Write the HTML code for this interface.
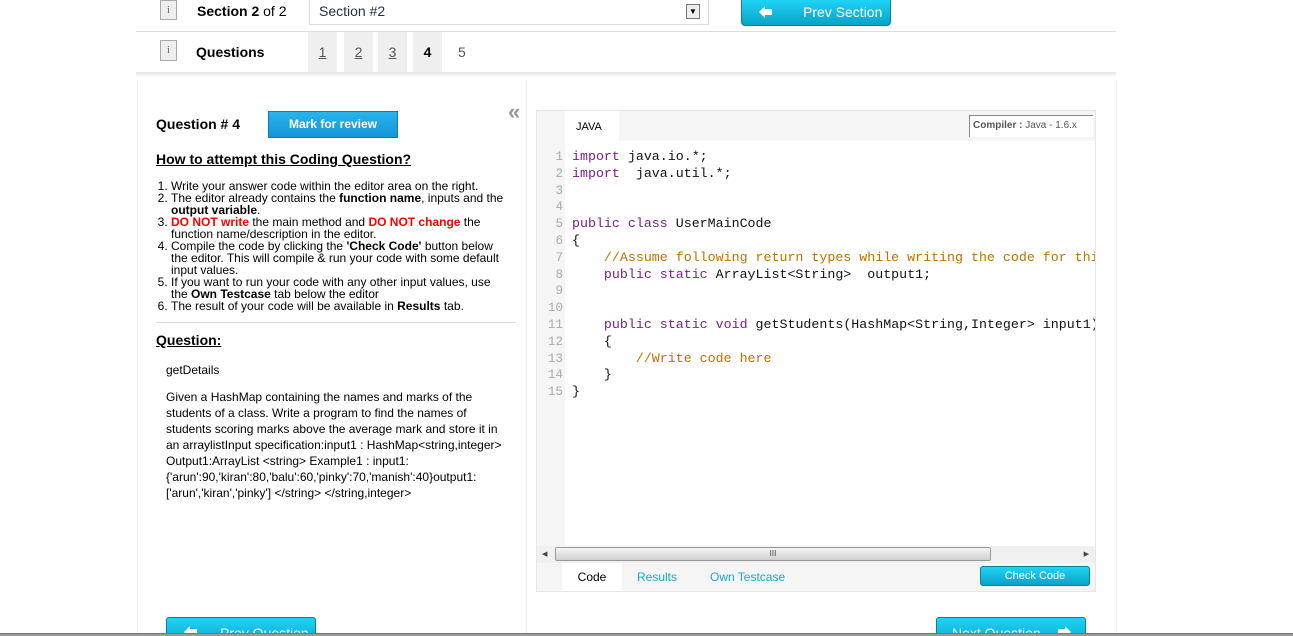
<!DOCTYPE html>
<html><head><meta charset="utf-8">
<style>
*{margin:0;padding:0;box-sizing:border-box}
html,body{width:1293px;height:636px;overflow:hidden}
body{background:#fff;font-family:"Liberation Sans",Arial,sans-serif;position:relative;color:#000}
.a{position:absolute}
.icon{position:absolute;width:17px;height:21px;background:#eee;border:1px solid #aaa;font:11px "Liberation Serif",serif;color:#666;text-align:center;line-height:19px}
.btn{position:absolute;background:linear-gradient(#1fd3f5,#0aa3c8);border:1px solid #0a7f9e;border-radius:3px;color:#fff;font-size:12px;text-align:center}
.pg{position:absolute;top:32px;width:29px;height:40px;background:#efefef;font-size:14px;color:#555;text-align:center;line-height:40px;text-decoration:underline}
ol{position:absolute;left:156px;top:180px;width:354px;font-size:12px;line-height:12px;padding-left:15px}
.r{color:#f00;font-weight:bold}
pre{font-family:"Liberation Mono",monospace;font-size:13.3px;line-height:16.8px}
.k{color:#7a1f8e}.c{color:#c07000}
svg{position:absolute}
</style></head><body>
<div class="icon" style="left:160px;top:0;height:20px">i</div>
<div class="a" style="left:197px;top:3px;font-size:14px"><b>Section 2</b> of 2</div>
<div class="a" style="left:309px;top:0;width:400px;height:25px;border:1px solid #ddd;border-top:none;font-size:14px;color:#234;padding:3px 0 0 9px">Section #2</div>
<div class="a" style="left:686px;top:4px;width:14px;height:15px;border:1px solid #777;background:#eee;font-size:8px;text-align:center;line-height:14px">▼</div>
<div class="btn" style="left:741px;top:0;width:150px;height:26px;border-top:none;font-size:14px;line-height:24px;border-radius:0 0 4px 4px;text-align:left">
<svg style="left:17px;top:6px" width="14" height="12" viewBox="0 0 14 12"><path d="M0 6L6 0V3H13V9H6V12Z" fill="#fff"/></svg>
<span style="position:absolute;left:61px">Prev Section</span></div>
<div class="a" style="left:136px;top:31px;width:980px;height:1px;background:#ddd"></div>
<div class="icon" style="left:160px;top:40px">i</div>
<div class="a" style="left:196px;top:44px;font-size:14px;font-weight:bold">Questions</div>
<div class="pg" style="left:308px">1</div><div class="pg" style="left:344px">2</div><div class="pg" style="left:378px">3</div>
<div class="pg" style="left:413px;text-decoration:none;color:#000;font-weight:bold">4</div>
<div class="a" style="left:458px;top:44px;font-size:14px;color:#555">5</div>
<div class="a" style="left:136px;top:72px;width:980px;height:6px;background:linear-gradient(#e6e6e6,#fff)"></div>
<div class="a" style="left:526px;top:80px;width:1px;height:556px;background:#eee"></div>
<div class="a" style="left:137px;top:80px;width:1px;height:556px;background:#f2f2f2"></div>
<div class="a" style="left:1116px;top:80px;width:1px;height:556px;background:#f2f2f2"></div>
<div class="a" style="left:156px;top:116px;font-size:14px;font-weight:bold">Question # 4</div>
<div class="btn" style="left:268px;top:111px;width:130px;height:27px;line-height:25px;font-weight:bold;border-radius:0;background:linear-gradient(#27b4ec,#1596d6);border-color:#1178b0">Mark for review</div>
<div class="a" style="left:508px;top:99px;font-size:22px;color:#999;font-weight:bold;letter-spacing:-3px">«</div>
<div class="a" style="left:156px;top:151px;font-size:14px;font-weight:bold;text-decoration:underline">How to attempt this Coding Question?</div>
<ol>
<li>Write your answer code within the editor area on the right.</li>
<li>The editor already contains the <b>function name</b>, inputs and the <b>output variable</b>.</li>
<li><span class="r">DO NOT write</span> the main method and <span class="r">DO NOT change</span> the function name/description in the editor.</li>
<li>Compile the code by clicking the <b>'Check Code'</b> button below the editor. This will compile &amp; run your code with some default input values.</li>
<li>If you want to run your code with any other input values, use the <b>Own Testcase</b> tab below the editor</li>
<li>The result of your code will be available in <b>Results</b> tab.</li>
</ol>
<div class="a" style="left:156px;top:322px;width:360px;height:1px;background:#ddd"></div>
<div class="a" style="left:156px;top:332px;font-size:14px;font-weight:bold;text-decoration:underline">Question:</div>
<div class="a" style="left:166px;top:363px;font-size:12px">getDetails</div>
<div class="a" style="left:166px;top:389px;width:346px;font-size:12px;line-height:16px">Given a HashMap containing the names and marks of the students of a class. Write a program to find the names of students scoring marks above the average mark and store it in an arraylistInput specification:input1 : HashMap&lt;string,integer&gt; Output1:ArrayList &lt;string&gt; Example1 : input1: {'arun':90,'kiran':80,'balu':60,'pinky':70,'manish':40}output1: ['arun','kiran','pinky'] &lt;/string&gt; &lt;/string,integer&gt;</div>
<div class="a" style="left:536px;top:110px;width:560px;height:482px;border:1px solid #e6e6e6;background:#f5f5f5;overflow:hidden">
 <div class="a" style="left:28px;top:0;width:530px;height:435px;background:#fff"></div>
 <div class="a" style="left:0;top:0;width:560px;height:30px;background:#f5f5f5"></div>
 <div class="a" style="left:28px;top:0;width:54px;height:30px;background:#fff;font-size:11px;padding:10px 0 0 11px">JAVA</div>
 <div class="a" style="left:432px;top:4px;width:124px;height:22px;border:1px solid #888;border-right:none;border-bottom:none;background:#fff;font-size:10px;color:#555;padding:4px 0 0 3px"><b>Compiler :</b> Java - 1.6.x</div>
 <pre class="a" style="left:0;top:38px;width:28px;text-align:right;color:#aaa;padding-right:2px;font-size:12.6px">1
2
3
4
5
6
7
8
9
10
11
12
13
14
15</pre>
 <pre class="a" style="left:35px;top:38px;color:#111"><span class="k">import</span> java.io.*;
<span class="k">import</span>  java.util.*;


<span class="k">public class</span> UserMainCode
{
    <span class="c">//Assume following return types while writing the code for this question.</span>
    <span class="k">public static</span> ArrayList&lt;String&gt;  output1;


    <span class="k">public static void</span> getStudents(HashMap&lt;String,Integer&gt; input1)
    {
        <span class="c">//Write code here</span>
    }
}</pre>
 <div class="a" style="left:0;top:435px;width:558px;height:17px;background:#f0f0f0;font-size:7px;color:#444;line-height:17px"><span style="position:absolute;left:5px">◀</span><span style="position:absolute;right:6px">▶</span>
  <div class="a" style="left:18px;top:1px;width:436px;height:14px;border:1px solid #999;border-radius:2px;background:linear-gradient(#f4f4f4,#cfcfcf);text-align:center;line-height:12px;font-size:8px">III</div></div>
 <div class="a" style="left:25px;top:452px;width:60px;height:29px;background:#fff;font-size:12px;text-align:center;line-height:29px">Code</div>
 <div class="a" style="left:100px;top:459px;font-size:12px;color:#19a6cf">Results</div>
 <div class="a" style="left:173px;top:459px;font-size:12px;color:#19a6cf">Own Testcase</div>
 <div class="btn" style="left:443px;top:455px;width:110px;height:20px;line-height:18px;font-size:11px">Check Code</div>
</div>
<div class="btn" style="left:166px;top:617px;width:150px;height:30px;font-size:14px;line-height:24px;text-align:left">
<svg style="left:17px;top:8px" width="14" height="12" viewBox="0 0 14 12"><path d="M0 6L6 0V3H13V9H6V12Z" fill="#fff"/></svg>
<span style="position:absolute;left:53px;top:3px">Prev Question</span></div>
<div class="btn" style="left:936px;top:617px;width:150px;height:30px;font-size:14px;line-height:24px;text-align:left">
<span style="position:absolute;left:15px;top:3px">Next Question</span>
<svg style="left:120px;top:8px" width="14" height="12" viewBox="0 0 14 12"><path d="M14 6L8 0V3H1V9H8V12Z" fill="#fff"/></svg></div>
<div class="a" style="left:0;top:633px;width:1293px;height:3px;background:#9a9a9a;border-top:1px solid #777"></div>
</body></html>
